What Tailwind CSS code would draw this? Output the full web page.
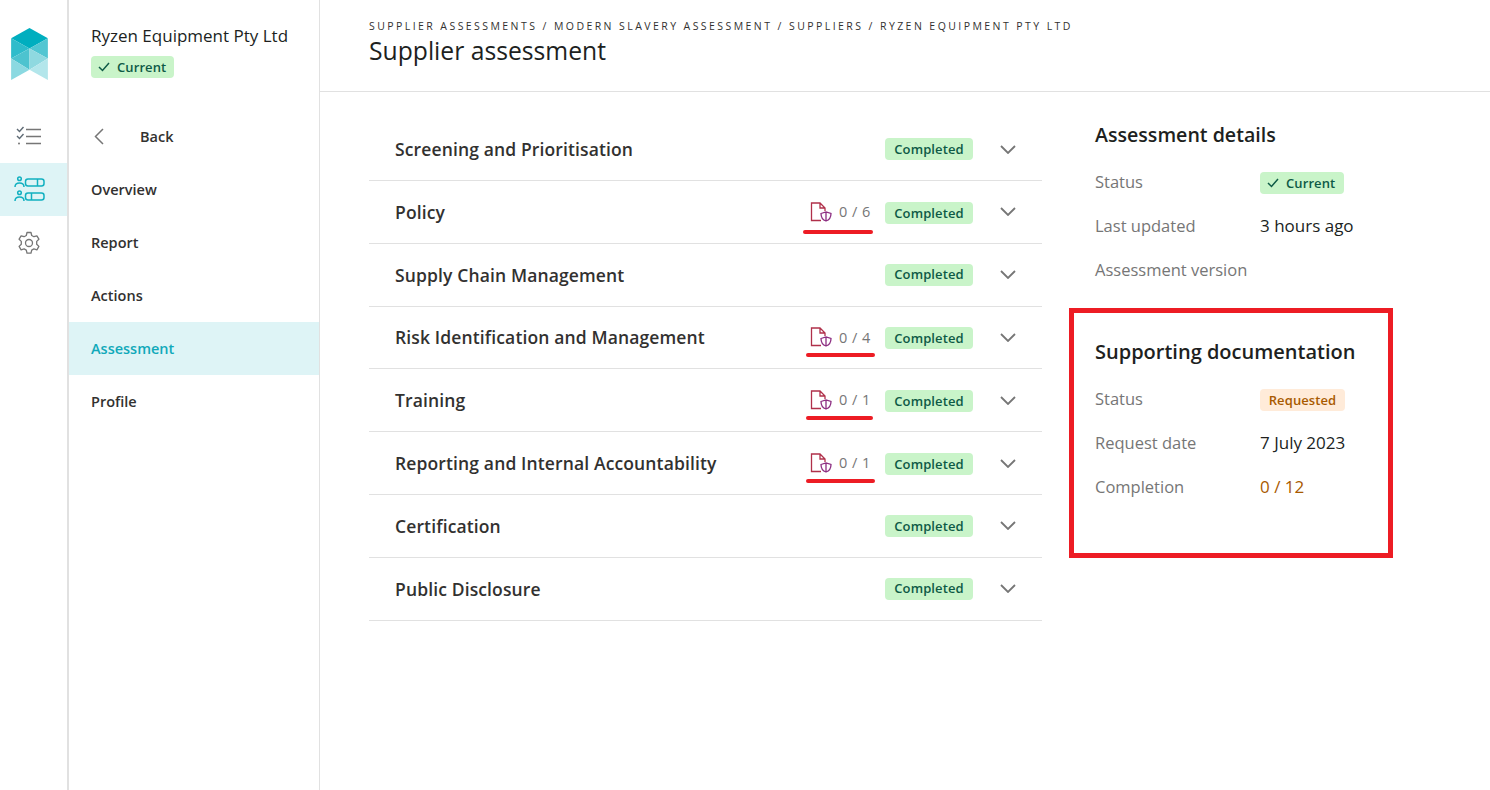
<!DOCTYPE html>
<html lang="en">
  <head>
    <meta charset="UTF-8" />
    <title>Supplier assessment</title>
    <script src="https://cdn.jsdelivr.net/npm/@tailwindcss/browser@4"></script>
  </head>
  <body class="bg-white font-['Open_Sans',sans-serif] text-[#201f1e] overflow-hidden">
    <div class="relative flex h-[790px] w-[1490px]">
      <!-- icon rail -->
      <aside class="w-[69px] shrink-0 border-r-2 border-[#e1e1e1] flex flex-col">
        <div class="h-[110px] pt-[28px] pl-[11px]">
          <svg width="37" height="52" viewBox="0 0 36 51">
            <polygon points="18,0 36,10 18,20 0,10" fill="#00aebf" />
            <polygon points="0,10 18,20 0,30" fill="#2fbccb" />
            <polygon points="36,10 18,20 36,30" fill="#52c6d2" />
            <polygon points="0,30 18,20 18,41" fill="#4dc3cf" />
            <polygon points="36,30 18,20 18,41" fill="#8fd9e0" />
            <polygon points="0,30 18,41 0,51" fill="#8bd9e1" />
            <polygon points="36,30 18,41 36,51" fill="#b3e6eb" />
          </svg>
        </div>
        <div class="h-[53px] flex items-center justify-center pr-[9px] pb-[2px]">
          <svg width="26" height="20" viewBox="0 0 26 20" fill="none" stroke="#767676" stroke-width="1.400">
            <path d="M1 3l2.500 2.500L7.500 1M1 10l2.500 2.500L7.500 8" stroke="#5f6b75" />
            <path d="M10 3.500h15M10 10.500h15M10 17.500h15" />
            <circle cx="3" cy="17.500" r="1" fill="#767676" stroke="none" />
          </svg>
        </div>
        <div class="h-[53px] flex items-center justify-center pr-[9px] bg-[#def4f6]">
          <svg width="31" height="27" viewBox="0 0 31 27" fill="none" stroke="#11b0c0" stroke-width="1.500">
            <circle cx="5.500" cy="2.800" r="1.800" />
            <path d="M1 11c0-2.500 2-4 4.500-4s4.500 1.500 4.500 4" />
            <circle cx="5.500" cy="16.800" r="1.800" />
            <path d="M1 25c0-2.500 2-4 4.500-4s4.500 1.500 4.500 4" />
            <rect x="11.500" y="3" width="18.500" height="7" rx="2.500" />
            <path d="M23.500 3v7" />
            <rect x="11.500" y="17" width="18.500" height="7" rx="2.500" />
            <path d="M17.500 17v7" />
          </svg>
        </div>
        <div class="h-[53px] flex items-center justify-center pr-[9px]">
          <svg width="24" height="24" viewBox="0 0 24 24" fill="none" stroke="#767676" stroke-width="1.300" stroke-linejoin="round">
            <circle cx="12" cy="12" r="3.500" />
            <path d="M10 1.500h4l.7 3 2.200 1.200 3-.9 2 3.400-2.200 2.200v2.800l2.200 2.200-2 3.400-3-.9-2.200 1.200-.7 3h-4l-.7-3-2.200-1.200-3 .9-2-3.400 2.200-2.200v-2.800L2.100 8.200l2-3.400 3 .9 2.200-1.200z" />
          </svg>
        </div>
      </aside>

      <!-- section nav -->
      <nav class="w-[251px] shrink-0 border-r border-[#e1e1e1] flex flex-col">
        <div class="h-[110px] pl-[22px] pt-[24px]">
          <div class="text-[17px] leading-[23px] whitespace-nowrap">Ryzen Equipment Pty Ltd</div>
          <span class="mt-[9px] inline-flex items-center h-[22px] w-[83px] pl-[7px] gap-[7px] rounded-[4px] bg-[#c9f4c9] text-[#0e5a46] text-[13px] tracking-[0.1px] font-semibold">
            <svg width="12" height="10" viewBox="0 0 12 10" fill="none" stroke="#0e5a46" stroke-width="1.500"><path d="M1 5l3.500 3.500L11 1" /></svg>
            <span class="pt-px">Current</span>
          </span>
        </div>
        <a class="h-[53px] flex items-center pl-[25px] text-[14.500px] font-semibold text-[#323130]">
          <svg width="10" height="17" viewBox="0 0 10 17" fill="none" stroke="#767676" stroke-width="1.500"><path d="M9 1L1.500 8.500 9 16" /></svg>
          <span class="ml-[36px]">Back</span>
        </a>
        <a class="h-[53px] flex items-center pl-[22px] text-[14.500px] font-semibold text-[#323130]">Overview</a>
        <a class="h-[53px] flex items-center pl-[22px] text-[14.500px] font-semibold text-[#323130]">Report</a>
        <a class="h-[53px] flex items-center pl-[22px] text-[14.500px] font-semibold text-[#323130]">Actions</a>
        <a class="h-[53px] flex items-center pl-[22px] text-[14.500px] font-semibold text-[#11a9ba] bg-[#def4f6]">Assessment</a>
        <a class="h-[53px] flex items-center pl-[22px] text-[14.500px] font-semibold text-[#323130]">Profile</a>
      </nav>

      <main class="flex-1 flex flex-col min-w-0">
        <header class="h-[92px] shrink-0 border-b border-[#e1e1e1] pl-[49px] pt-[19px]">
          <div class="text-[10.500px] leading-[15px] tracking-[2.430px] font-medium text-[#323130] uppercase whitespace-nowrap">Supplier assessments / Modern Slavery Assessment / Suppliers / Ryzen Equipment Pty Ltd</div>
          <h1 class="text-[24.700px] leading-[34px]">Supplier assessment</h1>
        </header>

        <div class="flex flex-1">
          <!-- assessment sections -->
          <section class="ml-[49px] mt-[26.200px] w-[673px] shrink-0">
            <div class="h-[62.800px] border-b border-[#e1e1e1] flex items-center pl-[26px]">
              <span class="flex-1 text-[17.500px] tracking-[0.13px] font-semibold text-[#323130]">Screening and Prioritisation</span>
              <span class="h-[22px] w-[88px] pt-px rounded-[4px] bg-[#c9f4c9] text-[#0e5a46] text-[13px] tracking-[0.1px] font-semibold flex items-center justify-center">Completed</span>
              <svg class="ml-[27px] mr-[26px]" width="16" height="9" viewBox="0 0 16 9" fill="none" stroke="#767676" stroke-width="1.800"><path d="M1 1l7 7 7-7" /></svg>
            </div>
            <div class="h-[62.800px] border-b border-[#e1e1e1] flex items-center pl-[26px]">
              <span class="flex-1 text-[17.500px] tracking-[0.13px] font-semibold text-[#323130]">Policy</span>
              <span class="w-[75px] flex items-center gap-[7px] text-[14.500px] tracking-[0.03em] text-[#767676]">
                <svg width="22" height="20" viewBox="0 0 22 20" fill="none" stroke="#b0304a" stroke-width="1.300"><path d="M11 18.500H1.500V1h8.500l5 5v3M10 1v5h5" /><path d="M11 11.500l5-1.500 5 1.500c0 4-2 6.500-5 7.500-3-1-5-3.500-5-7.500zM16 10v9" stroke="#8d2f82" /></svg>
                0 / 6
              </span>
              <span class="mt-[2px] h-[22px] w-[88px] pt-px rounded-[4px] bg-[#c9f4c9] text-[#0e5a46] text-[13px] tracking-[0.1px] font-semibold flex items-center justify-center">Completed</span>
              <svg class="ml-[27px] mr-[26px]" width="16" height="9" viewBox="0 0 16 9" fill="none" stroke="#767676" stroke-width="1.800"><path d="M1 1l7 7 7-7" /></svg>
            </div>
            <div class="h-[62.800px] border-b border-[#e1e1e1] flex items-center pl-[26px]">
              <span class="flex-1 text-[17.500px] tracking-[0.13px] font-semibold text-[#323130]">Supply Chain Management</span>
              <span class="h-[22px] w-[88px] pt-px rounded-[4px] bg-[#c9f4c9] text-[#0e5a46] text-[13px] tracking-[0.1px] font-semibold flex items-center justify-center">Completed</span>
              <svg class="ml-[27px] mr-[26px]" width="16" height="9" viewBox="0 0 16 9" fill="none" stroke="#767676" stroke-width="1.800"><path d="M1 1l7 7 7-7" /></svg>
            </div>
            <div class="h-[62.800px] border-b border-[#e1e1e1] flex items-center pl-[26px]">
              <span class="flex-1 text-[17.500px] tracking-[0.13px] font-semibold text-[#323130]">Risk Identification and Management</span>
              <span class="w-[75px] flex items-center gap-[7px] text-[14.500px] tracking-[0.03em] text-[#767676]">
                <svg width="22" height="20" viewBox="0 0 22 20" fill="none" stroke="#b0304a" stroke-width="1.300"><path d="M11 18.500H1.500V1h8.500l5 5v3M10 1v5h5" /><path d="M11 11.500l5-1.500 5 1.500c0 4-2 6.500-5 7.500-3-1-5-3.500-5-7.500zM16 10v9" stroke="#8d2f82" /></svg>
                0 / 4
              </span>
              <span class="mt-[2px] h-[22px] w-[88px] pt-px rounded-[4px] bg-[#c9f4c9] text-[#0e5a46] text-[13px] tracking-[0.1px] font-semibold flex items-center justify-center">Completed</span>
              <svg class="ml-[27px] mr-[26px]" width="16" height="9" viewBox="0 0 16 9" fill="none" stroke="#767676" stroke-width="1.800"><path d="M1 1l7 7 7-7" /></svg>
            </div>
            <div class="h-[62.800px] border-b border-[#e1e1e1] flex items-center pl-[26px]">
              <span class="flex-1 text-[17.500px] tracking-[0.13px] font-semibold text-[#323130]">Training</span>
              <span class="w-[75px] flex items-center gap-[7px] text-[14.500px] tracking-[0.03em] text-[#767676]">
                <svg width="22" height="20" viewBox="0 0 22 20" fill="none" stroke="#b0304a" stroke-width="1.300"><path d="M11 18.500H1.500V1h8.500l5 5v3M10 1v5h5" /><path d="M11 11.500l5-1.500 5 1.500c0 4-2 6.500-5 7.500-3-1-5-3.500-5-7.500zM16 10v9" stroke="#8d2f82" /></svg>
                0 / 1
              </span>
              <span class="mt-[2px] h-[22px] w-[88px] pt-px rounded-[4px] bg-[#c9f4c9] text-[#0e5a46] text-[13px] tracking-[0.1px] font-semibold flex items-center justify-center">Completed</span>
              <svg class="ml-[27px] mr-[26px]" width="16" height="9" viewBox="0 0 16 9" fill="none" stroke="#767676" stroke-width="1.800"><path d="M1 1l7 7 7-7" /></svg>
            </div>
            <div class="h-[62.800px] border-b border-[#e1e1e1] flex items-center pl-[26px]">
              <span class="flex-1 text-[17.500px] tracking-[0.13px] font-semibold text-[#323130]">Reporting and Internal Accountability</span>
              <span class="w-[75px] flex items-center gap-[7px] text-[14.500px] tracking-[0.03em] text-[#767676]">
                <svg width="22" height="20" viewBox="0 0 22 20" fill="none" stroke="#b0304a" stroke-width="1.300"><path d="M11 18.500H1.500V1h8.500l5 5v3M10 1v5h5" /><path d="M11 11.500l5-1.500 5 1.500c0 4-2 6.500-5 7.500-3-1-5-3.500-5-7.500zM16 10v9" stroke="#8d2f82" /></svg>
                0 / 1
              </span>
              <span class="mt-[2px] h-[22px] w-[88px] pt-px rounded-[4px] bg-[#c9f4c9] text-[#0e5a46] text-[13px] tracking-[0.1px] font-semibold flex items-center justify-center">Completed</span>
              <svg class="ml-[27px] mr-[26px]" width="16" height="9" viewBox="0 0 16 9" fill="none" stroke="#767676" stroke-width="1.800"><path d="M1 1l7 7 7-7" /></svg>
            </div>
            <div class="h-[62.800px] border-b border-[#e1e1e1] flex items-center pl-[26px]">
              <span class="flex-1 text-[17.500px] tracking-[0.13px] font-semibold text-[#323130]">Certification</span>
              <span class="h-[22px] w-[88px] pt-px rounded-[4px] bg-[#c9f4c9] text-[#0e5a46] text-[13px] tracking-[0.1px] font-semibold flex items-center justify-center">Completed</span>
              <svg class="ml-[27px] mr-[26px]" width="16" height="9" viewBox="0 0 16 9" fill="none" stroke="#767676" stroke-width="1.800"><path d="M1 1l7 7 7-7" /></svg>
            </div>
            <div class="h-[62.800px] border-b border-[#e1e1e1] flex items-center pl-[26px]">
              <span class="flex-1 text-[17.500px] tracking-[0.13px] font-semibold text-[#323130]">Public Disclosure</span>
              <span class="h-[22px] w-[88px] pt-px rounded-[4px] bg-[#c9f4c9] text-[#0e5a46] text-[13px] tracking-[0.1px] font-semibold flex items-center justify-center">Completed</span>
              <svg class="ml-[27px] mr-[26px]" width="16" height="9" viewBox="0 0 16 9" fill="none" stroke="#767676" stroke-width="1.800"><path d="M1 1l7 7 7-7" /></svg>
            </div>
          </section>

          <!-- details column -->
          <section class="ml-[53px] w-[300px] shrink-0 pt-[28px]">
            <h2 class="text-[19.600px] leading-[30px] font-semibold">Assessment details</h2>
            <div class="mt-[10px] grid grid-cols-[165px_1fr] auto-rows-[44px] items-center text-[17px]">
              <span class="text-[16.500px] text-[#767676]">Status</span>
              <span class="mt-[2px] inline-flex items-center h-[22px] w-[84px] pl-[7px] gap-[7px] rounded-[4px] bg-[#c9f4c9] text-[#0e5a46] text-[13px] tracking-[0.1px] font-semibold">
                <svg width="12" height="10" viewBox="0 0 12 10" fill="none" stroke="#0e5a46" stroke-width="1.500"><path d="M1 5l3.500 3.500L11 1" /></svg>
                <span class="pt-px">Current</span>
              </span>
              <span class="text-[16.500px] text-[#767676]">Last updated</span>
              <span>3 hours ago</span>
              <span class="text-[16.500px] text-[#767676] whitespace-nowrap">Assessment version</span>
              <span></span>
            </div>
            <h2 class="mt-[45px] text-[20px] leading-[30px] font-semibold">Supporting documentation</h2>
            <div class="mt-[10px] grid grid-cols-[165px_1fr] auto-rows-[44px] items-center text-[17px]">
              <span class="text-[16.500px] text-[#767676]">Status</span>
              <span class="mt-[2px] inline-flex items-center justify-center pt-px h-[22px] w-[85px] rounded-[4px] bg-[#ffebd9] text-[#a85a00] text-[13px] tracking-[0.1px] font-semibold">Requested</span>
              <span class="text-[16.500px] text-[#767676]">Request date</span>
              <span>7 July 2023</span>
              <span class="text-[16.500px] text-[#767676]">Completion</span>
              <span class="text-[#a85a00]">0 / 12</span>
            </div>
          </section>
        </div>
      </main>

      <!-- red annotations drawn over the page -->
      <div class="absolute left-[803px] top-[230px] w-[70px] h-[4px] rounded-full bg-[#ed1c24]"></div>
      <div class="absolute left-[806px] top-[353px] w-[69px] h-[4px] rounded-full bg-[#ed1c24]"></div>
      <div class="absolute left-[806px] top-[416px] w-[67px] h-[4px] rounded-full bg-[#ed1c24]"></div>
      <div class="absolute left-[806px] top-[479px] w-[69px] h-[4px] rounded-full bg-[#ed1c24]"></div>
      <div class="absolute left-[1069px] top-[308px] w-[324px] h-[250px] border-[5px] border-[#ed1c24]"></div>
    </div>
  </body>
</html>
